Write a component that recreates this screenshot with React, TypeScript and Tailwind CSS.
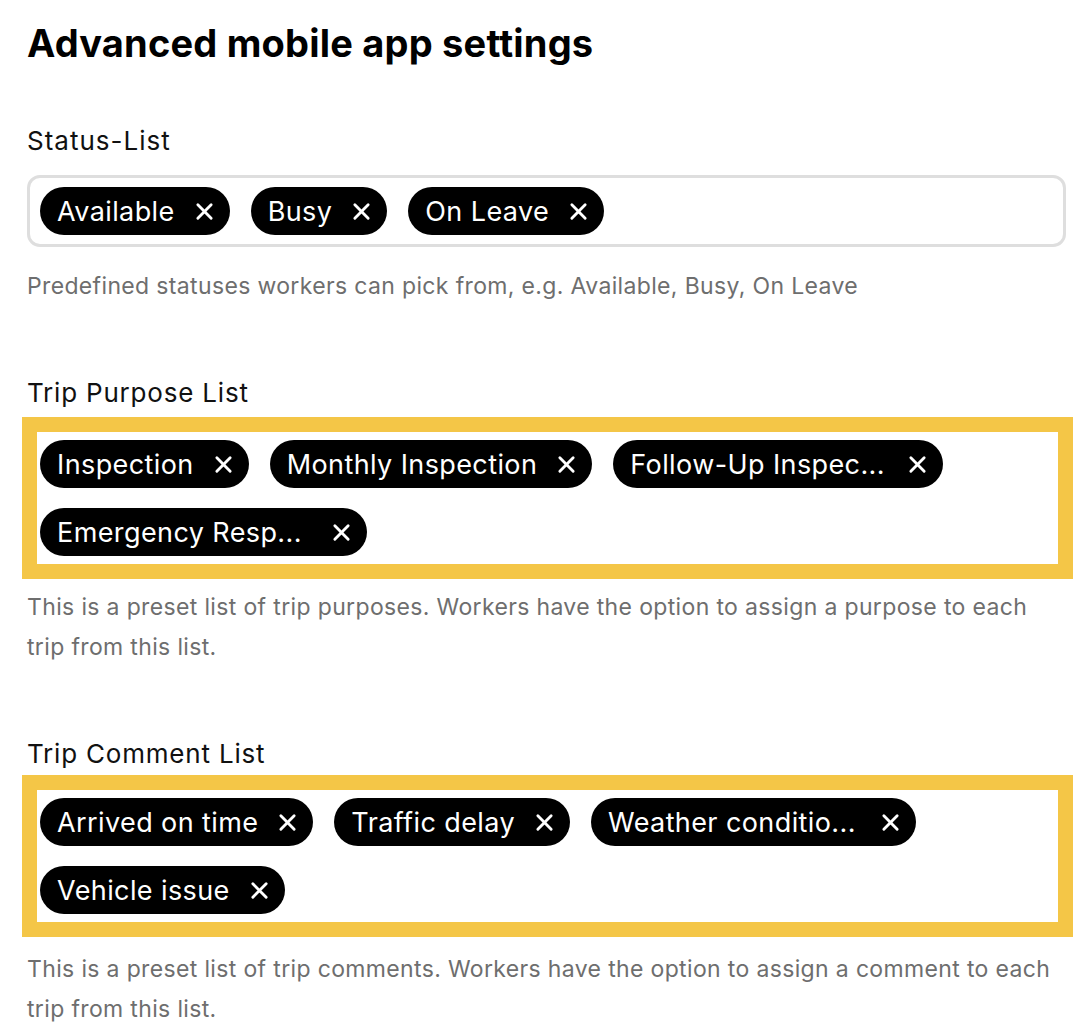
type Item = { label: string; extra?: number };

const statuses: Item[] = [{ label: "Available" }, { label: "Busy" }, { label: "On Leave" }];
const purposes: Item[] = [
  { label: "Inspection" },
  { label: "Monthly Inspection" },
  { label: "Follow-Up Inspec...", extra: 3 },
  { label: "Emergency Resp...", extra: 10 },
];
const comments: Item[] = [
  { label: "Arrived on time" },
  { label: "Traffic delay" },
  { label: "Weather conditio...", extra: 5 },
  { label: "Vehicle issue" },
];

function Chip({ item }: { item: Item }) {
  return (
    <span className="inline-flex items-center h-[48px] rounded-full bg-black text-white pl-[17px] pr-[16px] text-[27px] tracking-[0.4px] leading-none">
      <span style={{ marginRight: item.extra ?? 0 }}>{item.label}</span>
      <svg className="ml-[20px] h-[19px] w-[19px]" viewBox="0 0 20 20" fill="none" stroke="currentColor" strokeWidth="3" strokeLinecap="round">
        <path d="M3 3L17 17M17 3L3 17" />
      </svg>
    </span>
  );
}

export default function App() {
  return (
    <div className="min-h-screen bg-white pl-[27px] pr-[22px] pt-[21px] text-[#111] font-['Inter','Liberation_Sans',sans-serif]">
      <h1 className="text-[38px] leading-[44px] font-bold text-black tracking-[0.2px]">Advanced mobile app settings</h1>

      <div className="mt-[60px]">
        <div className="text-[26px] leading-[32px] tracking-[1px]">Status-List</div>
        <div className="mt-[18px] border-[3px] border-[#dedede] rounded-[13px] px-[10px] py-[9px] flex flex-wrap gap-[21px]">
          {statuses.map((s) => (
            <Chip key={s.label} item={s} />
          ))}
        </div>
        <p className="mt-[19px] text-[23px] leading-[40px] tracking-[0.35px] text-[#6e6e6e]">
          Predefined statuses workers can pick from, e.g. Available, Busy, On Leave
        </p>
      </div>

      <div className="mt-[71px]">
        <div className="text-[26px] leading-[32px] tracking-[0.8px]">Trip Purpose List</div>
        <div className="mt-[8px] -ml-[5px] -mr-[7px] border-[15px] border-[#f4c647] pl-[3px] pr-[3px] py-[8px] flex flex-wrap gap-x-[21px] gap-y-[20px]">
          {purposes.map((s) => (
            <Chip key={s.label} item={s} />
          ))}
        </div>
        <p className="mt-[8px] text-[23px] leading-[40px] tracking-[0.35px] text-[#6e6e6e]">
          This is a preset list of trip purposes. Workers have the option to assign a purpose to each trip from this list.
        </p>
      </div>

      <div className="mt-[71px]">
        <div className="text-[26px] leading-[32px] tracking-[0.8px]">Trip Comment List</div>
        <div className="mt-[5px] -ml-[5px] -mr-[7px] border-[15px] border-[#f4c647] pl-[3px] pr-[3px] py-[8px] flex flex-wrap gap-x-[21px] gap-y-[20px]">
          {comments.map((s) => (
            <Chip key={s.label} item={s} />
          ))}
        </div>
        <p className="mt-[12px] text-[23px] leading-[40px] tracking-[0.35px] text-[#6e6e6e]">
          This is a preset list of trip comments. Workers have the option to assign a comment to each trip from this list.
        </p>
      </div>
    </div>
  );
}
